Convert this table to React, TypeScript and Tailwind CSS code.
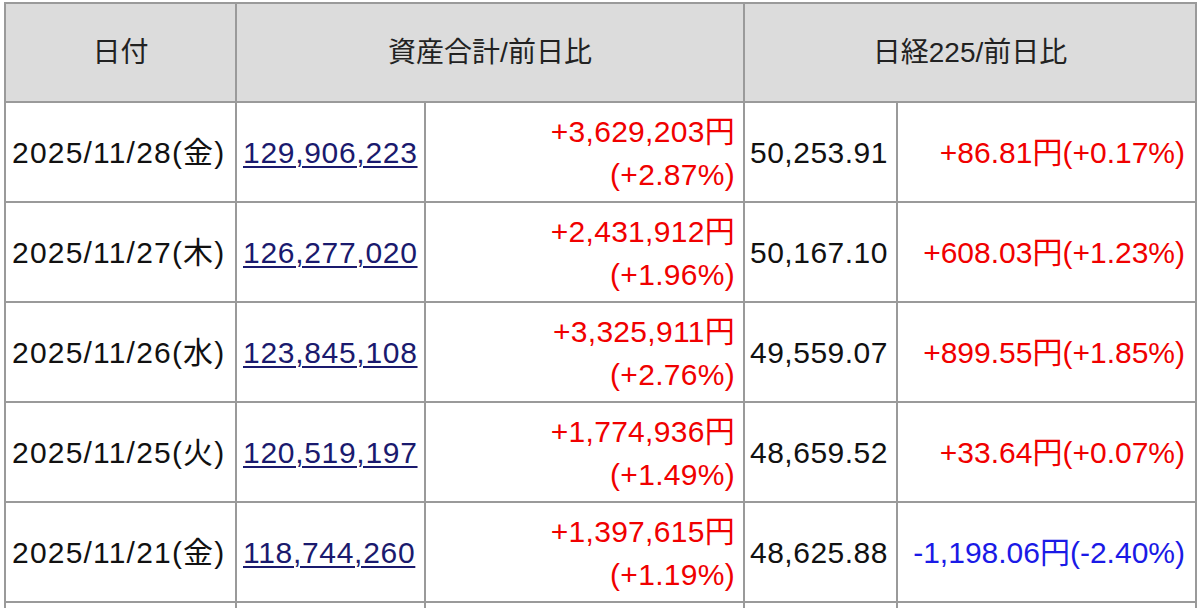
const rows = [
  {
    date: "2025/11/28(金)",
    total: "129,906,223",
    diff: "+3,629,203円",
    diffPct: "(+2.87%)",
    nikkei: "50,253.91",
    nikkeiDiff: "+86.81円(+0.17%)",
    up: true,
  },
  {
    date: "2025/11/27(木)",
    total: "126,277,020",
    diff: "+2,431,912円",
    diffPct: "(+1.96%)",
    nikkei: "50,167.10",
    nikkeiDiff: "+608.03円(+1.23%)",
    up: true,
  },
  {
    date: "2025/11/26(水)",
    total: "123,845,108",
    diff: "+3,325,911円",
    diffPct: "(+2.76%)",
    nikkei: "49,559.07",
    nikkeiDiff: "+899.55円(+1.85%)",
    up: true,
  },
  {
    date: "2025/11/25(火)",
    total: "120,519,197",
    diff: "+1,774,936円",
    diffPct: "(+1.49%)",
    nikkei: "48,659.52",
    nikkeiDiff: "+33.64円(+0.07%)",
    up: true,
  },
  {
    date: "2025/11/21(金)",
    total: "118,744,260",
    diff: "+1,397,615円",
    diffPct: "(+1.19%)",
    nikkei: "48,625.88",
    nikkeiDiff: "-1,198.06円(-2.40%)",
    up: false,
  },
];

const cell = "border-r-2 border-b-2 border-[#9a9a9a] p-0";

export default function App() {
  return (
    <div
      className="h-[608px] overflow-hidden bg-white pl-[4px] pt-[2px] text-[#111]"
      style={{ fontFamily: '"Liberation Sans", "Noto Sans CJK JP", sans-serif' }}
    >
      <table className="w-[1193px] table-fixed border-separate border-spacing-0 border-l-2 border-t-2 border-[#9a9a9a]">
        <colgroup>
          <col className="w-[231px]" />
          <col className="w-[189px]" />
          <col className="w-[319px]" />
          <col className="w-[153px]" />
          <col className="w-[299px]" />
        </colgroup>
        <thead>
          <tr className="h-[99px] bg-[#dcdcdc] text-[28px] font-normal text-[#222]">
            <th className={`${cell} font-normal`}>日付</th>
            <th colSpan={2} className={`${cell} font-normal`}>
              資産合計/前日比
            </th>
            <th colSpan={2} className={`${cell} font-normal`}>
              日経225/前日比
            </th>
          </tr>
        </thead>
        <tbody className="text-[30px] leading-[43px]">
          {rows.map((row) => (
            <tr key={row.date} className="h-[100px]">
              <td className={`${cell} pl-[6px] whitespace-nowrap tracking-[1.2px]`}>
                {row.date}
              </td>
              <td className={`${cell} pl-[6px] tracking-[0.7px]`}>
                <a
                  href="#"
                  className="text-[#1a1a6e] underline decoration-[length:2px] underline-offset-[3px]"
                >
                  {row.total}
                </a>
              </td>
              <td
                className={`${cell} pr-[8px] pt-[2px] text-right tracking-[0.3px] text-[#f00000]`}
              >
                <div>{row.diff}</div>
                <div>{row.diffPct}</div>
              </td>
              <td className={`${cell} pl-[5px] whitespace-nowrap tracking-[0.5px]`}>
                {row.nikkei}
              </td>
              <td
                className={`${cell} pr-[10px] text-right whitespace-nowrap ${
                  row.up ? "text-[#f00000]" : "text-[#1a1ae6]"
                }`}
              >
                {row.nikkeiDiff}
              </td>
            </tr>
          ))}
          <tr className="h-[100px]">
            <td className={cell}></td>
            <td className={cell}></td>
            <td className={cell}></td>
            <td className={cell}></td>
            <td className={cell}></td>
          </tr>
        </tbody>
      </table>
    </div>
  );
}
